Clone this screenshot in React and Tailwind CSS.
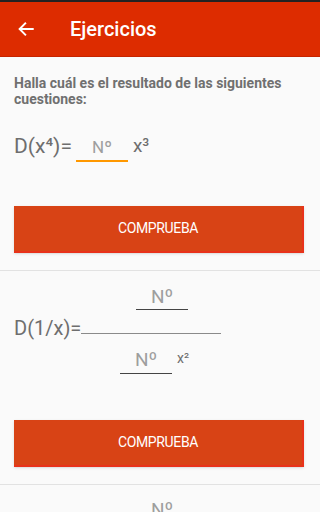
import React from 'react';

const font = { fontFamily: 'Roboto, "Noto Sans", sans-serif' };

const BackArrow = () => (
  <svg width="18" height="18" viewBox="0 0 24 24" fill="none" stroke="white" strokeWidth="2.6" strokeLinecap="square">
    <path d="M21 12H4" />
    <path d="M11 4.5L3.5 12l7.5 7.5" />
  </svg>
);

const CheckButton = () => (
  <button className="w-[290px] h-[47px] bg-[#d84315] border-r-2 border-b-2 border-[#e8321a] text-white text-[14px] tracking-tight shadow-sm">
    COMPRUEBA
  </button>
);

export default function App() {
  return (
    <div className="w-[320px] h-[512px] overflow-hidden bg-[#fafafa]" style={font}>
      <div className="h-[2px] bg-[#222]" />
      {/* app bar */}
      <div className="h-[55px] bg-[#dd2c00] flex items-center border-b border-[#c62400]">
        <div className="w-[70px] pl-[17px] flex items-center">
          <BackArrow />
        </div>
        <span className="text-white text-[20px] font-medium">Ejercicios</span>
      </div>

      {/* exercise 1 */}
      <div className="px-[14px] pt-[18px]">
        <p className="text-[14px] leading-[16px] font-bold text-[#707070]">
          Halla cuál es el resultado de las siguientes cuestiones:
        </p>
        <div className="flex items-center mt-[23px] text-[#6e6e6e]">
          <span className="text-[21px] leading-[24px]">D(x⁴)=</span>
          <div className="ml-[4px] w-[52px] border-b-2 border-[#ff9800] text-center text-[17px] text-[#9e9e9e] leading-[22px] pb-[2px] mt-[6px]">
            Nº
          </div>
          <span className="ml-[5px] text-[19px] leading-[24px]">x³</span>
        </div>
        <div className="mt-[44px]">
          <CheckButton />
        </div>
      </div>

      <div className="mt-[17px] border-t border-[#e2e2e2]" />

      {/* exercise 2 */}
      <div className="px-[14px]">
        <div className="flex justify-center pl-[4px] pt-[16px]">
          <div className="w-[52px] border-b border-[#444] text-center text-[19px] leading-[20px] text-[#9e9e9e] pb-[2px]">
            Nº
          </div>
        </div>
        <div className="flex items-end text-[#6e6e6e] mt-[6px]">
          <span className="text-[20px] leading-[24px]">D(1/x)=</span>
          <div className="w-[140px] border-b border-[#8a8a8a] mb-[6px]" />
        </div>
        <div className="flex items-end pl-[106px] mt-[10px]">
          <div className="w-[52px] border-b border-[#444] text-center text-[19px] leading-[20px] text-[#9e9e9e] pb-[3px]">
            Nº
          </div>
          <span className="ml-[5px] mb-[8px] text-[14px] leading-[16px] text-[#6e6e6e]">x²</span>
        </div>
        <div className="mt-[46px]">
          <CheckButton />
        </div>
      </div>

      <div className="mt-[17px] border-t border-[#e2e2e2]" />

      <div className="flex justify-center pl-[4px] pt-[15px]">
        <div className="w-[52px] text-center text-[19px] leading-[20px] text-[#9e9e9e]">Nº</div>
      </div>
    </div>
  );
}
